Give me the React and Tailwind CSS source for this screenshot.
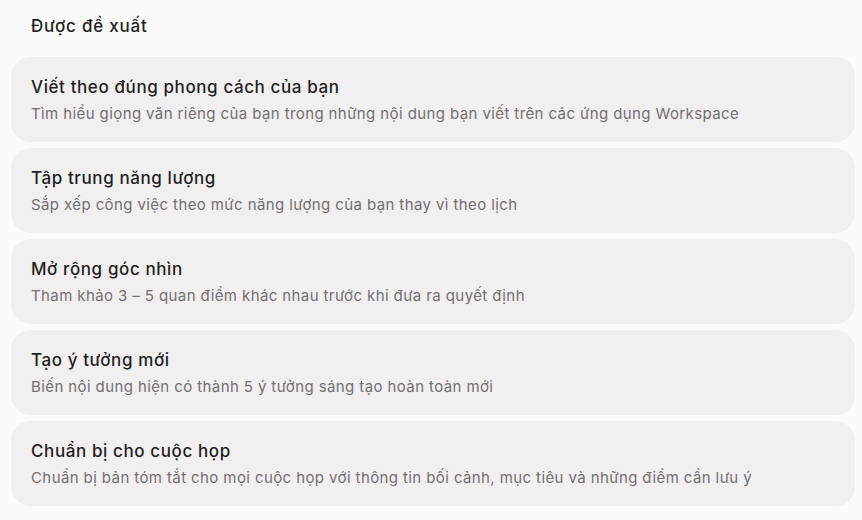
const items = [
  {
    title: "Viết theo đúng phong cách của bạn",
    desc: "Tìm hiểu giọng văn riêng của bạn trong những nội dung bạn viết trên các ứng dụng Workspace",
  },
  {
    title: "Tập trung năng lượng",
    desc: "Sắp xếp công việc theo mức năng lượng của bạn thay vì theo lịch",
  },
  {
    title: "Mở rộng góc nhìn",
    desc: "Tham khảo 3 – 5 quan điểm khác nhau trước khi đưa ra quyết định",
  },
  {
    title: "Tạo ý tưởng mới",
    desc: "Biến nội dung hiện có thành 5 ý tưởng sáng tạo hoàn toàn mới",
  },
  {
    title: "Chuẩn bị cho cuộc họp",
    desc: "Chuẩn bị bản tóm tắt cho mọi cuộc họp với thông tin bối cảnh, mục tiêu và những điểm cần lưu ý",
  },
];

export default function App() {
  return (
    <div
      className="min-h-[520px] w-[862px] bg-[#fcfbfb] pl-[11px] pr-[7px] pt-[14px]"
      style={{ fontFamily: "Inter, 'Noto Sans', sans-serif" }}
    >
      <h2 className="pl-5 text-[17px] font-medium leading-[24px] tracking-[0.8px] text-[#1f1f1f]">Được đề xuất</h2>

      {/* suggestion cards */}
      <div className="mt-[19px] flex flex-col gap-[6px]">
        {items.map((item) => (
          <div key={item.title} className="h-[85px] rounded-[20px] bg-[#f1eff0] px-5 pt-[18px]">
            <p className="text-[17px] font-medium leading-[24px] tracking-[0.6px] text-[#1f1f1f]">{item.title}</p>
            <p className="mt-[5px] text-[15px] leading-[20px] tracking-[0.4px] text-[#727071]">{item.desc}</p>
          </div>
        ))}
      </div>
    </div>
  );
}
